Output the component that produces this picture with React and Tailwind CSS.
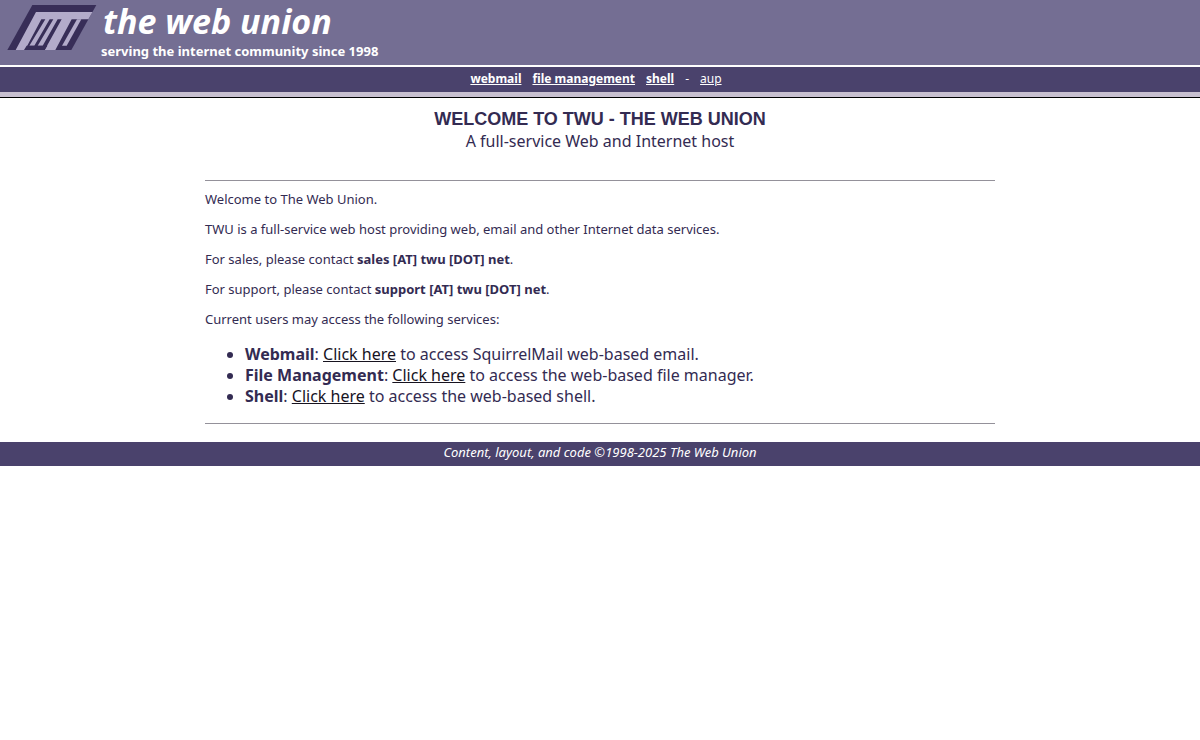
const services = [
  { name: "Webmail", rest: "to access SquirrelMail web-based email." },
  { name: "File Management", rest: "to access the web-based file manager." },
  { name: "Shell", rest: "to access the web-based shell." },
];

function Logo() {
  return (
    <svg viewBox="21 15 270 138" className="h-[46px] w-[90px] shrink-0" role="img" aria-label="TWU">
      <path d="M97 15H289L214 150H22Z" fill="#382e58" />
      <path d="M108 36H277.500L265 58H215L166 150H134L185 58H173L128 137H113L160 58H149L103 137H88L136 58H124L75 150H47Z" fill="#b3abca" />
      <path d="M128 137H142L134 150H72L80 137Z" fill="#382e58" />
      <path d="M231 58H244L200 137H186Z" fill="#b3abca" />
    </svg>
  );
}

export default function App() {
  return (
    <div className="min-h-screen bg-white font-['Segoe_UI','Noto_Sans',sans-serif] text-[#332b52]">
      <header className="flex h-[65px] gap-1 bg-[#746e93] pl-[7px] pt-[5px] text-white">
        <Logo />
        <div>
          <h1 className="pl-[2px] text-[34px] font-bold italic leading-8">the web union</h1>
          <p className="text-[13px] font-bold leading-7">serving the internet community since 1998</p>
        </div>
      </header>
      <nav className="mt-[2px] flex h-[30px] justify-center gap-[11px] border-b-[5px] border-[#c8c0d0] bg-[#4a426c] pr-2 text-[12px] leading-6 text-white">
        <a href="#webmail" className="font-bold underline">webmail</a>
        <a href="#files" className="font-bold underline">file management</a>
        <a href="#shell" className="font-bold underline">shell</a>
        <span>-</span>
        <a href="#aup" className="underline">aup</a>
      </nav>
      <main className="border-t border-black pb-[18px] pt-[10px]">
        <h2 className="text-center font-['Liberation_Sans',sans-serif] text-[18px] font-bold leading-[22px]">
          WELCOME TO TWU - THE WEB UNION
        </h2>
        <p className="text-center text-[16px] leading-[22px]">A full-service Web and Internet host</p>
        <div className="mx-auto mt-[28px] w-[790px] max-w-full border-y border-[#94919a]">
          <div className="flex flex-col gap-[10px] pt-2 text-[13px] leading-5">
            <p>Welcome to The Web Union.</p>
            <p>TWU is a full-service web host providing web, email and other Internet data services.</p>
            <p>For sales, please contact <b>sales [AT] twu [DOT] net</b>.</p>
            <p>For support, please contact <b>support [AT] twu [DOT] net</b>.</p>
            <p>Current users may access the following services:</p>
          </div>
          <ul className="list-disc pb-4 pl-10 pt-[15px] text-[16px] leading-[21px]">
            {services.map((s) => (
              <li key={s.name}>
                <b>{s.name}</b>: <a href="#service" className="text-[#17131f] underline">Click here</a> {s.rest}
              </li>
            ))}
          </ul>
        </div>
      </main>
      <footer className="bg-[#4a426c] pb-1 text-center text-[13px] italic leading-5 text-white">
        Content, layout, and code ©1998-2025 The Web Union
      </footer>
    </div>
  );
}
